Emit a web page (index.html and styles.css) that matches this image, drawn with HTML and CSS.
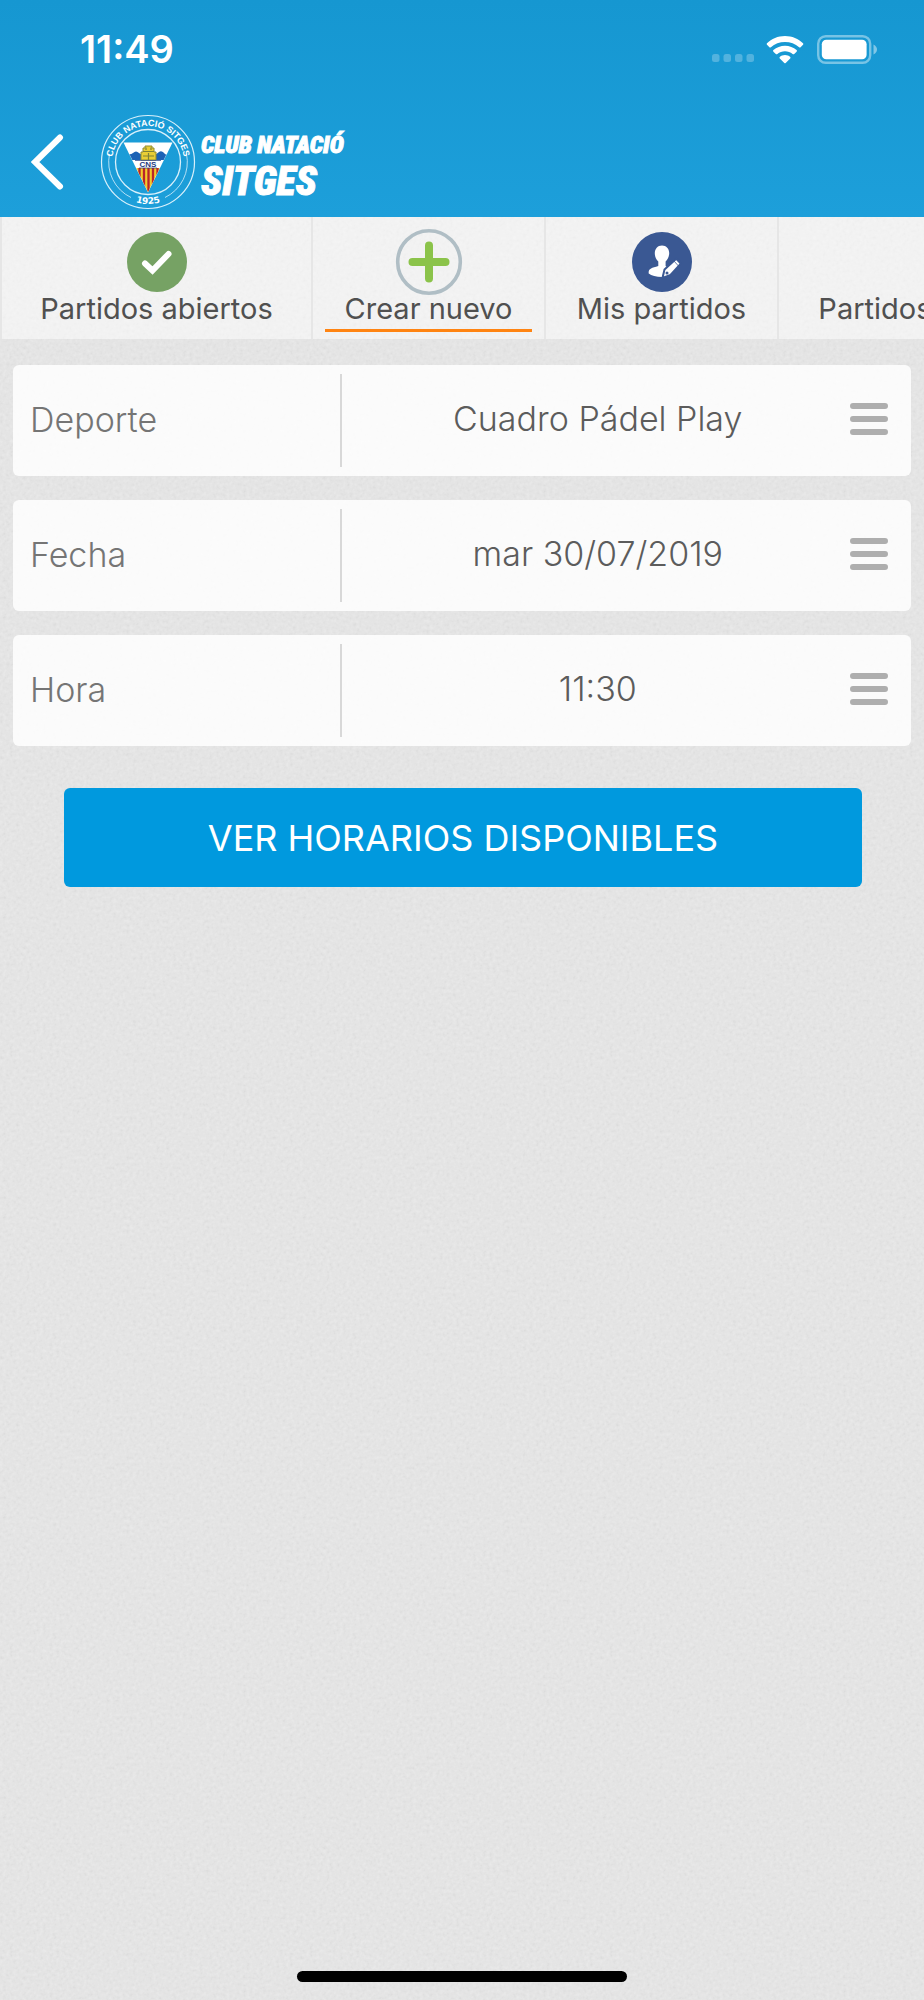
FILE: index.html
```html
<!DOCTYPE html>
<html lang="es">
<head>
<meta charset="utf-8">
<meta name="viewport" content="width=device-width, initial-scale=1">
<title>Crear nuevo partido</title>
<link rel="stylesheet" href="styles.css">
</head>
<body>
<div class="app">
  <header class="header">
    <div class="status">
      <time class="clock">11:49</time>
      <div class="indicators">
        <svg class="cell" width="42" height="8" viewBox="0 0 42 8" aria-hidden="true">
          <g fill="#fff" fill-opacity=".25"><rect width="7.500" height="8" rx="2.500"/><rect x="11.500" width="7.500" height="8" rx="2.500"/><rect x="23" width="7.500" height="8" rx="2.500"/><rect x="34.500" width="7.500" height="8" rx="2.500"/></g>
        </svg>
        <svg class="wifi" width="38" height="29" viewBox="0 0 38 29" aria-hidden="true">
          <g fill="#fff"><path d="M19 1C26 1 32.500 3.800 37 8.200Q37.800 9 37 9.800L34.600 12.200Q33.900 12.900 33.100 12.200C29.300 8.800 24.400 6.900 19 6.900S8.700 8.800 4.900 12.200Q4.100 12.900 3.400 12.200L1 9.800Q.2 9 1 8.200C5.500 3.800 12 1 19 1Z"/><path d="M19 10.700C23.400 10.700 27.500 12.300 30.600 15.100Q31.400 15.900 30.600 16.700L28.200 19Q27.400 19.700 26.600 19C24.500 17.200 21.800 16.200 19 16.200S13.500 17.200 11.400 19Q10.600 19.700 9.800 19L7.400 16.700Q6.600 15.900 7.400 15.100C10.500 12.300 14.600 10.700 19 10.700Z"/><path d="M19 20C21 20 22.900 20.700 24.200 21.900Q25 22.700 24.200 23.500L19.700 28Q19 28.700 18.300 28L13.800 23.500Q13 22.700 13.800 21.900C15.100 20.700 17 20 19 20Z"/></g>
        </svg>
        <svg class="battery" width="61" height="29" viewBox="0 0 61 29" aria-hidden="true">
          <rect x="1.200" y="1.200" width="52" height="26.600" rx="7.500" fill="none" stroke="#fff" stroke-opacity=".42" stroke-width="2.400"/>
          <rect x="4.800" y="4.800" width="44.800" height="19.400" rx="4.500" fill="#fff"/>
          <path d="M56.500 9.500Q60 11.300 60 14.500T56.500 19.500Z" fill="#fff" fill-opacity=".45"/>
        </svg>
      </div>
    </div>
    <div class="brandbar">
      <button class="back" type="button" aria-label="Volver">
        <svg width="34" height="56" viewBox="0 0 34 56"><path d="M29 3.500L4 28L29 52.500" fill="none" stroke="#fff" stroke-width="6" stroke-linecap="round" stroke-linejoin="miter"/></svg>
      </button>
      <svg class="crest" width="96" height="96" viewBox="0 0 96 96" aria-label="Escudo del club">
        <defs>
          <path id="arc-top" d="M12 48A36 36 0 0 1 84 48"/>
          <path id="arc-bottom" d="M6 48A42 42 0 0 0 90 48"/>
          <clipPath id="shield"><path d="M24 29H72L48 78Z"/></clipPath>
        </defs>
        <g fill="none" stroke="#d9f0fb">
          <circle cx="48" cy="48" r="46.500" stroke-width="1.200"/>
          <circle cx="48" cy="48" r="32.500" stroke-width="1.300"/>
          <path d="M9.500 40A39.300 39.300 0 0 0 31 83.500M86.500 40A39.300 39.300 0 0 1 65 83.500" stroke-width=".8"/>
        </g>
        <text class="crest-name"><textPath href="#arc-top" startOffset="50%" text-anchor="middle">CLUB NATACIÓ SITGES</textPath></text>
        <text class="crest-year"><textPath href="#arc-bottom" startOffset="50%" text-anchor="middle">1925</textPath></text>
        <path d="M23.500 28.500H72.500L48 78.500Z" fill="#fff"/>
        <g clip-path="url(#shield)">
          <path d="M26 38Q29 42 33 39Q36 36 39 39L42 41H55L59 38Q62 36 65 40Q68 42 71 37V46H26Z" fill="#1c62b5"/>
          <path d="M30 54H66V80H30Z" fill="#f4cb2b"/>
          <path d="M39.500 54V80M44 54V80M48.500 54V80M53 54V80M57.500 54V80" stroke="#b9252b" stroke-width="2.300"/>
        </g>
        <path d="M41 46V38H43V34H45V32H52V34H54V38H56V46Z" fill="#e9ce35" stroke="#8e8c33" stroke-width="1"/>
        <path d="M43 37.500H54M43 42H54M46 33.500V36M51 33.500V36M48.500 39V46" stroke="#7e8237" stroke-width="1.200"/>
        <path d="M35 46.500H61M39 54H57" stroke="#243a80" stroke-width=".7"/>
        <text class="crest-cns" x="48" y="53" text-anchor="middle">CNS</text>
      </svg>
      <div class="wordmark"><span class="word-top">CLUB NATACIÓ</span><span class="word-main">SITGES</span></div>
    </div>
  </header>

  <nav class="tabs" aria-label="Partidos">
    <a class="tab tab-open" href="#abiertos">
      <svg class="tab-icon" viewBox="0 0 68 68" aria-hidden="true"><circle cx="34" cy="34" r="30" fill="#76a264"/><path d="M22 35.500L29.500 42.500L45.500 26" fill="none" stroke="#fff" stroke-width="6" stroke-linecap="round"/></svg>
      <span class="tab-text">Partidos abiertos</span>
    </a>
    <a class="tab" href="#nuevo" aria-current="page">
      <svg class="tab-icon" viewBox="0 0 68 68" aria-hidden="true"><circle cx="34" cy="34" r="31.300" fill="none" stroke="#b0bec5" stroke-width="3.600"/><path d="M34 17.500V50.500M17.500 34H50.500" stroke="#8bc34a" stroke-width="8" stroke-linecap="round"/></svg>
      <span class="tab-text">Crear nuevo</span>
    </a>
    <a class="tab" href="#mis">
      <svg class="tab-icon" viewBox="0 0 68 68" aria-hidden="true"><circle cx="34" cy="34" r="30" fill="#3a5893"/><path d="M34 17.500C38.500 17.500 41.400 21 41.200 25.500C41 29 39.600 31.800 37.600 33.500V38Q39.500 39.500 41 40L35 46L34.300 49C28 49 23.500 47.500 20.700 45.500C20.200 40.500 23.500 40 30.300 38V33.500C28.200 31.600 26.900 29 26.800 25.500C26.700 21 29.500 17.500 34 17.500Z" fill="#fff"/><path d="M34.500 50L36.500 41.500L48.500 30.500L53 35.500L42.500 47Z" fill="#fff" stroke="#3a5893" stroke-width="2"/><path d="M45.500 32.500L50.500 38M47.500 31L52.500 36" stroke="#3a5893" stroke-width=".8"/><circle cx="39" cy="45" r="1.500" fill="#3a5893"/></svg>
      <span class="tab-text">Mis partidos</span>
    </a>
    <a class="tab tab-finished" href="#finalizados">
      <svg class="tab-icon" viewBox="0 0 68 68" aria-hidden="true"><circle cx="35" cy="34" r="30" fill="#c9c2bd"/></svg>
      <span class="tab-text">Partidos finalizados</span>
    </a>
  </nav>

  <main class="main">
    <form class="form">
      <div class="field">
        <label class="field-label" for="deporte">Deporte</label>
        <select class="field-value" id="deporte"><option>Cuadro Pádel Play</option></select>
        <svg class="menu" viewBox="0 0 38 32" aria-hidden="true"><path d="M3 3H35M3 16H35M3 29H35"/></svg>
      </div>
      <div class="field">
        <label class="field-label" for="fecha">Fecha</label>
        <select class="field-value" id="fecha"><option>mar 30/07/2019</option></select>
        <svg class="menu" viewBox="0 0 38 32" aria-hidden="true"><path d="M3 3H35M3 16H35M3 29H35"/></svg>
      </div>
      <div class="field">
        <label class="field-label" for="hora">Hora</label>
        <select class="field-value" id="hora"><option>11:30</option></select>
        <svg class="menu" viewBox="0 0 38 32" aria-hidden="true"><path d="M3 3H35M3 16H35M3 29H35"/></svg>
      </div>
      <button class="submit" type="button">VER HORARIOS DISPONIBLES</button>
    </form>
  </main>
  <div class="home"></div>
</div>
</body>
</html>
```
FILE: styles.css
```css
* { box-sizing: border-box; }

body {
  margin: 0;
  font-family: Inter, "Noto Sans", sans-serif;
  background-color: #e4e4e4;
  background-image: url("data:image/svg+xml,%3Csvg xmlns='http://www.w3.org/2000/svg' width='300' height='300'%3E%3Cfilter id='n' x='0' y='0' width='100%25' height='100%25'%3E%3CfeTurbulence type='fractalNoise' baseFrequency='.3' numOctaves='2' stitchTiles='stitch'/%3E%3CfeColorMatrix values='.1 0 0 0 .844 .1 0 0 0 .844 .1 0 0 0 .844 0 0 0 0 1' color-interpolation-filters='sRGB'/%3E%3C/filter%3E%3Crect width='300' height='300' filter='url(%23n)'/%3E%3Crect width='300' height='300' fill='%23000' opacity='.022'/%3E%3C/svg%3E");
}

.app {
  display: flex;
  flex-direction: column;
  min-height: 100vh;
  overflow: hidden;
}

.header {
  background: linear-gradient(#1697d1, #1d9fda);
  color: #fff;
}

.status {
  display: flex;
  justify-content: space-between;
  align-items: center;
  height: 98px;
  padding: 0 46px 0 80px;
}

.clock {
  font-size: 38px;
  font-weight: 600;
  line-height: 44px;
}

.indicators { display: flex; align-items: center; }
.cell { margin: 18px 12px 0 0; }
.wifi { margin-right: 13px; }

.brandbar {
  display: flex;
  align-items: center;
  height: 119px;
  padding: 9px 31px 0;
}

.back {
  display: flex;
  padding: 0;
  border: 0;
  background: none;
  margin-right: 35px;
}

.crest {
  font-family: "Liberation Sans", sans-serif;
  font-weight: 700;
  fill: #fff;
}
.crest-name { font-size: 9px; }
.crest-year { font-family: "DejaVu Sans", sans-serif; font-size: 9px; }
.crest-cns { font-size: 8px; fill: #243a80; }

.wordmark {
  display: flex;
  flex-direction: column;
  padding: 9px 0 0 5px;
  font-family: "Roboto Condensed", "Open Sans Condensed", Lato, sans-serif;
  font-style: italic;
  font-weight: 900;
  white-space: nowrap;
  -webkit-text-stroke: 1px #fff;
}
.word-top { font-size: 24px; line-height: 30px; }
.word-main { font-size: 40px; line-height: 44px; }

.tabs {
  display: flex;
  height: 122px;
  background: rgba(255, 255, 255, .5);
}

.tab {
  display: flex;
  flex: none;
  flex-direction: column;
  align-items: center;
  width: 233px;
  padding: 11px 12px 7px;
  border-left: 2px solid #e6e6e6;
  color: #505050;
  text-decoration: none;
}
.tab-open { width: 311px; }
.tab-finished { width: 350px; }
.tab-icon { flex: none; width: 68px; height: 68px; }

.tab-text {
  width: 100%;
  height: 38px;
  font-size: 29px;
  line-height: 26px;
  text-align: center;
  white-space: nowrap;
  border-bottom: 3px solid transparent;
}
.tab[aria-current] .tab-text { border-color: #ff8412; }

.main { flex: 1; padding: 26px 13px; }

.form { display: flex; flex-direction: column; gap: 24px; }

.field {
  display: grid;
  grid-template-columns: 4fr 7fr;
  align-items: center;
  position: relative;
  height: 111px;
  border-radius: 6px;
  background: rgba(255, 255, 255, .84);
}

.field-label {
  padding: 0 0 2px 17px;
  color: #757575;
  font-size: 34px;
  font-weight: 300;
}

.field-value {
  appearance: none;
  width: 100%;
  height: 93px;
  padding: 0 57px 4px 0;
  border: 0;
  border-left: 2px solid #d8d8d8;
  border-radius: 0;
  background: none;
  color: #5c5c5c;
  font: 300 34px Inter, "Noto Sans", sans-serif;
  text-align: center;
  text-align-last: center;
}

.menu {
  position: absolute;
  right: 23px;
  width: 38px;
  height: 32px;
  margin-bottom: 4px;
  fill: none;
  stroke: #aeaeae;
  stroke-width: 6px;
  stroke-linecap: round;
  pointer-events: none;
}

.submit {
  height: 99px;
  margin: 18px 49px 0 51px;
  border: 0;
  border-radius: 6px;
  background: #0099de;
  color: #fff;
  font: 400 36px Inter, "Noto Sans", sans-serif;
}

.home {
  align-self: center;
  width: 330px;
  height: 11px;
  margin-bottom: 18px;
  border-radius: 6px;
  background: #000;
}
```
